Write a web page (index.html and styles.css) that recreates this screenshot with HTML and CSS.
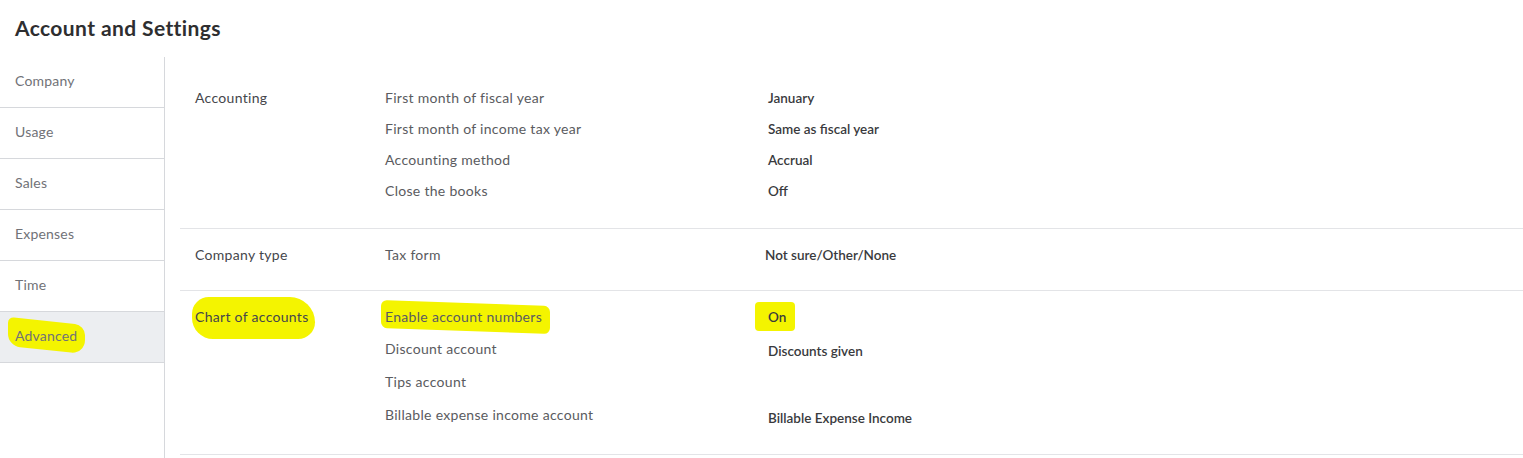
FILE: index.html
```html
<!DOCTYPE html>
<html lang="en">
<head>
    <meta charset="UTF-8">
    <title>Account and Settings</title>
    <link rel="stylesheet" href="styles.css">
</head>
<body>
    <h1 class="page-title">Account and Settings</h1>

    <div class="settings">
        <ul class="side-nav">
            <li>Company</li>
            <li>Usage</li>
            <li>Sales</li>
            <li>Expenses</li>
            <li>Time</li>
            <li class="active"><span class="mark mark-nav">Advanced</span></li>
        </ul>

        <div class="content">
            <section class="section">
                <div class="section-name">Accounting</div>
                <div class="rows">
                    <div class="row"><span class="label">First month of fiscal year</span><span class="value">January</span></div>
                    <div class="row"><span class="label">First month of income tax year</span><span class="value">Same as fiscal year</span></div>
                    <div class="row"><span class="label">Accounting method</span><span class="value">Accrual</span></div>
                    <div class="row"><span class="label">Close the books</span><span class="value">Off</span></div>
                </div>
            </section>

            <section class="section section-short">
                <div class="section-name">Company type</div>
                <div class="rows">
                    <div class="row"><span class="label">Tax form</span><span class="value value-shift">Not sure/Other/None</span></div>
                </div>
            </section>

            <section class="section section-tall">
                <div class="section-name"><span class="mark mark-name">Chart of accounts</span></div>
                <div class="rows">
                    <div class="row"><span class="label"><span class="mark mark-label">Enable account numbers</span></span><span class="value"><span class="mark mark-value">On</span></span></div>
                    <div class="row"><span class="label">Discount account</span><span class="value value-low">Discounts given</span></div>
                    <div class="row"><span class="label">Tips account</span><span class="value"></span></div>
                    <div class="row"><span class="label">Billable expense income account</span><span class="value value-lower">Billable Expense Income</span></div>
                </div>
            </section>
        </div>
    </div>
</body>
</html>
```

FILE: styles.css
```css
* {
    margin: 0;
    padding: 0;
    box-sizing: border-box;
}

body {
    font-family: Lato, 'Open Sans', sans-serif;
    background: #fff;
    color: #393a3d;
    overflow: hidden;
}

.page-title {
    font-size: 21px;
    font-weight: 700;
    letter-spacing: 0.4px;
    color: #2e2e30;
    padding: 15px 15px 0;
    height: 57px;
}

.settings {
    display: flex;
}

.side-nav {
    list-style: none;
    width: 165px;
    flex-shrink: 0;
    border-right: 1px solid #d6d8dc;
    min-height: 401px;
}

.side-nav li {
    height: 51px;
    padding: 0 15px 4px;
    display: flex;
    align-items: center;
    font-size: 14px;
    letter-spacing: 0.2px;
    color: #717277;
    border-bottom: 1px solid #d6d8dc;
}

.side-nav li.active {
    background: #eceef1;
    padding-bottom: 3px;
}

.content {
    flex: 1;
    padding: 15px 0 0 15px;
}

.section {
    display: flex;
    padding: 10px 0 22px 15px;
    border-bottom: 1px solid #e3e4e7;
}

.section-short {
    padding-bottom: 20px;
}

.section-tall {
    padding-bottom: 23px;
}

.section-tall .row {
    height: 33px;
}

.section-tall .row:first-child {
    height: 31px;
}

.section-name {
    width: 190px;
    font-size: 14px;
    letter-spacing: 0.3px;
    color: #45464b;
    height: 31px;
    display: flex;
    align-items: center;
}

.rows {
    flex: 1;
}

.row {
    display: flex;
    align-items: center;
    height: 31px;
}

.label {
    width: 383px;
    font-size: 14px;
    letter-spacing: 0.3px;
    color: #5a5b60;
}

.value {
    font-size: 13.5px;
    font-weight: 600;
    color: #393a3d;
}

.value-shift {
    margin-left: -3px;
}

.value-low {
    padding-top: 4px;
}

.value-lower {
    padding-top: 7px;
}

/* highlighter strokes */
.mark {
    position: relative;
    z-index: 0;
}

.mark::before {
    content: "";
    position: absolute;
    z-index: -1;
    background: #f4f400;
}

.mark-nav::before {
    left: -7px;
    right: -8px;
    top: -6px;
    bottom: -6px;
    border-radius: 6px 10px 14px 12px;
    transform: skewY(6deg);
}

.mark-name::before {
    left: -3px;
    right: -6px;
    top: -11px;
    bottom: -14px;
    border-radius: 20px 30px 20px 25px;
}

.mark-label::before {
    left: -4px;
    right: -8px;
    top: -5px;
    bottom: -6px;
    border-radius: 6px;
    transform: skewY(2deg);
}

.mark-value::before {
    left: -13px;
    right: -9px;
    top: -7px;
    bottom: -6px;
    border-radius: 4px;
}
```
